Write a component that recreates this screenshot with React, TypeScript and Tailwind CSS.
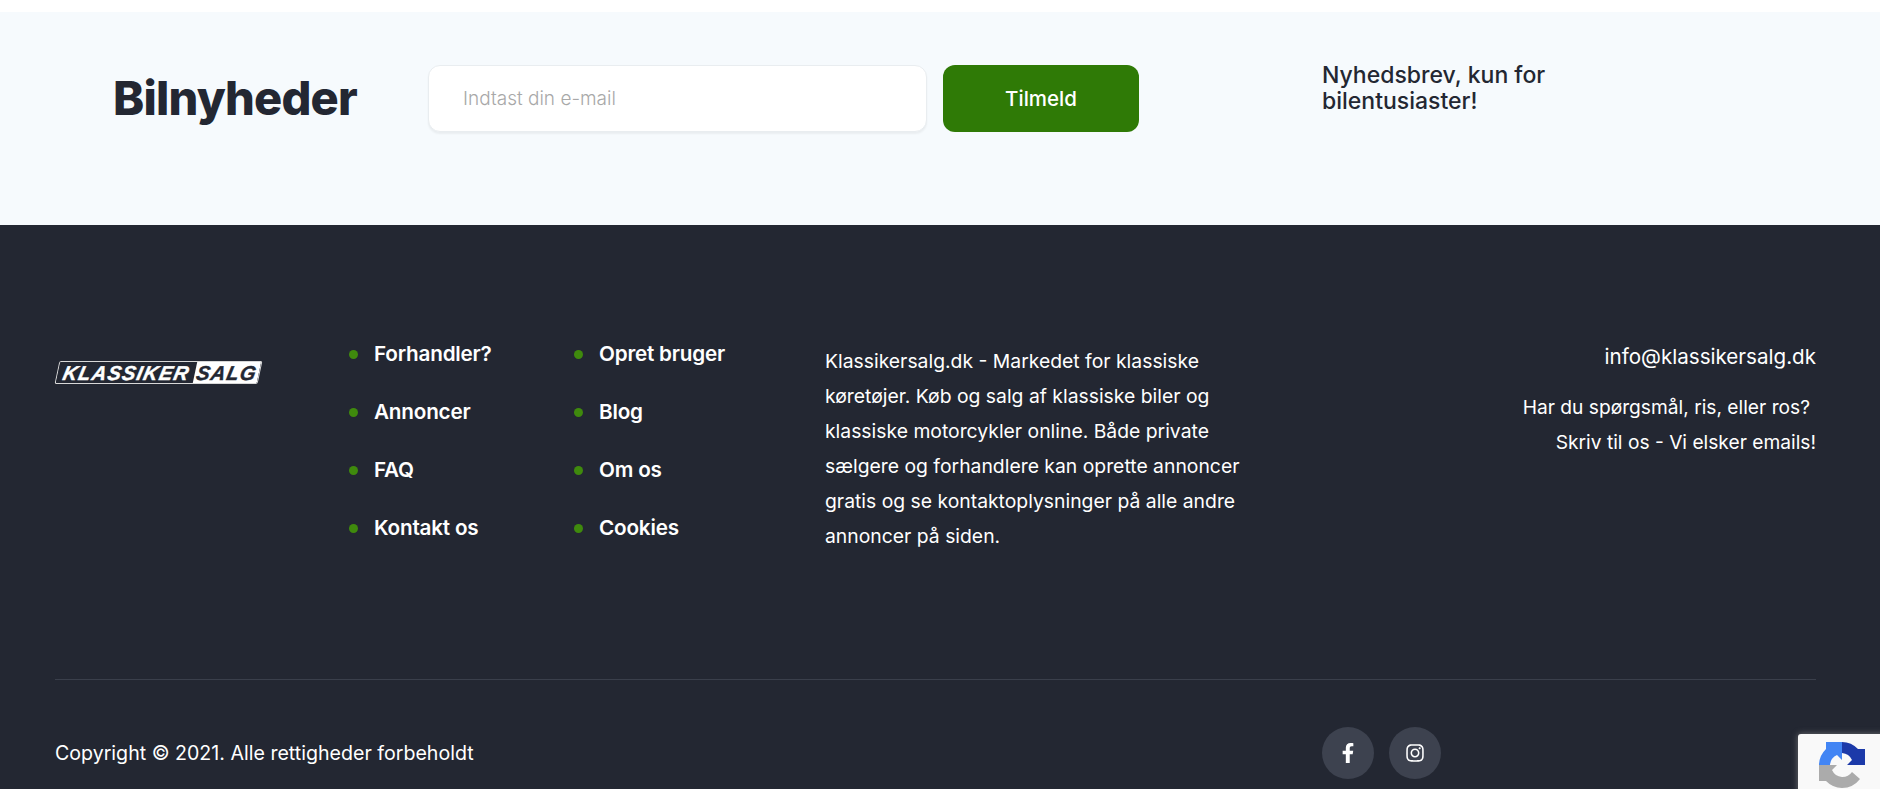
import { FaFacebookF, FaInstagram } from "react-icons/fa";

const font = { fontFamily: "Inter, 'Noto Sans', sans-serif" };

const col1 = ["Forhandler?", "Annoncer", "FAQ", "Kontakt os"];
const col2 = ["Opret bruger", "Blog", "Om os", "Cookies"];
const para = [
  "Klassikersalg.dk - Markedet for klassiske",
  "køretøjer. Køb og salg af klassiske biler og",
  "klassiske motorcykler online. Både private",
  "sælgere og forhandlere kan oprette annoncer",
  "gratis og se kontaktoplysninger på alle andre",
  "annoncer på siden.",
];

function LinkList({ items, width }: { items: string[]; width: string }) {
  return (
    <ul className={`flex flex-col ${width}`}>
      {items.map((t) => (
        <li key={t} className="flex h-[58px] items-center pt-[2px]">
          <span className="mr-[16px] h-[9px] w-[9px] rounded-full bg-[#3f8a0d]" />
          <span className="text-[20.7px] font-semibold tracking-[-0.2px] text-white">{t}</span>
        </li>
      ))}
    </ul>
  );
}

function Logo() {
  return (
    <div className="mt-[37px] flex h-[24px] w-[294px] items-start pl-[2px]">
      <div className="flex h-[23px] w-[203px] -skew-x-12 overflow-hidden rounded-[2px] border border-[#d8d8d8]">
        <div className="flex w-[137px] items-center justify-center bg-[#232732] text-[20px] leading-none font-bold tracking-[1.2px] text-white italic [-webkit-text-stroke:0.4px_#ffffff] [font-family:'Liberation_Sans',sans-serif]">
          KLASSIKER
        </div>
        <div className="flex flex-1 items-center justify-center bg-white text-[20px] leading-none font-bold tracking-[1.2px] text-[#232732] italic [-webkit-text-stroke:0.4px_#232732] [font-family:'Liberation_Sans',sans-serif]">
          SALG
        </div>
      </div>
    </div>
  );
}

function RecaptchaIcon() {
  return (
    <svg viewBox="0 0 46 46" className="h-[46px] w-[46px]">
      <path d="M23 46A23 23 0 0 1 7 39L0 39L0 23L18 23L13 28A12 12 0 0 0 23 35A12 12 0 0 0 33 30L41 37A23 23 0 0 1 23 46Z" fill="#ababab" />
      <path d="M0 23A23 23 0 0 1 7 7L7 0L23 0L23 18L18 13A12 12 0 0 0 11 23Z" fill="#4285f4" />
      <path d="M23 0A23 23 0 0 1 39 7L46 7L46 23L28 23L33 18A12 12 0 0 0 23 11Z" fill="#1c3aa9" />
    </svg>
  );
}

export default function App() {
  return (
    <div className="relative h-[789px] w-full overflow-hidden bg-white" style={font}>
      <div className="h-[12px]" />
      <section className="flex h-[213px] items-start bg-[#f6fafd] pt-[53px] pl-[113px] text-[#232732]">
        <h2 className="flex h-[67px] w-[315px] items-center text-[47px] font-extrabold tracking-[-0.8px]">Bilnyheder</h2>
        <input
          placeholder="Indtast din e-mail"
          className="h-[67px] w-[499px] rounded-[12px] border border-[#e9edf0] bg-white pl-[34px] text-[19px] font-light shadow-[0_2px_2px_rgba(0,0,0,0.05)] outline-none placeholder:text-[#a8a8a8]"
        />
        <button className="ml-[16px] h-[67px] w-[196px] rounded-[12px] bg-[#2f7a06] pt-[1px] text-[20.5px] font-medium text-white">
          Tilmeld
        </button>
        <p className="mt-[-3px] ml-[183px] w-[300px] text-[23px] leading-[26px] font-medium">
          Nyhedsbrev, kun for
          <br />
          bilentusiaster!
        </p>
      </section>
      <footer className="h-[564px] bg-[#232732] pt-[99px] pr-[64px] pl-[55px] text-white">
        <div className="flex h-[356px] items-start border-b border-[#3a3f4b]">
          <Logo />
          <LinkList items={col1} width="w-[225px]" />
          <LinkList items={col2} width="w-[251px]" />
          <div className="mt-[20px] w-[480px] text-[19.35px] leading-[35px]">
            {para.map((l) => (
              <div key={l}>{l}</div>
            ))}
          </div>
          <div className="mt-[18px] flex-1 text-right">
            <div className="text-[20.6px] leading-[30px]">info@klassikersalg.dk</div>
            <div className="mt-[18px] pr-[6px] text-[19.2px] leading-[35px]">Har du spørgsmål, ris, eller ros?</div>
            <div className="text-[19.2px] leading-[35px]">Skriv til os - Vi elsker emails!</div>
          </div>
        </div>
        <div className="flex h-[109px] items-start pt-[47px]">
          <div className="flex h-[52px] w-[1267px] items-center pt-[1px] text-[19.6px]">Copyright © 2021. Alle rettigheder forbeholdt</div>
          <div className="flex gap-[15px]">
            <a className="flex h-[52px] w-[52px] items-center justify-center rounded-full bg-[#3d424f] text-[20px]">
              <FaFacebookF />
            </a>
            <a className="flex h-[52px] w-[52px] items-center justify-center rounded-full bg-[#3d424f] text-[20px]">
              <FaInstagram />
            </a>
          </div>
        </div>
      </footer>
      <div className="absolute top-[734px] left-[1798px] flex h-[60px] w-[90px] justify-start rounded-tl-[3px] bg-[#f9f9f9] pt-[8px] pl-[21px] shadow-[0_0_6px_rgba(130,130,130,0.8)]">
        <RecaptchaIcon />
      </div>
    </div>
  );
}
